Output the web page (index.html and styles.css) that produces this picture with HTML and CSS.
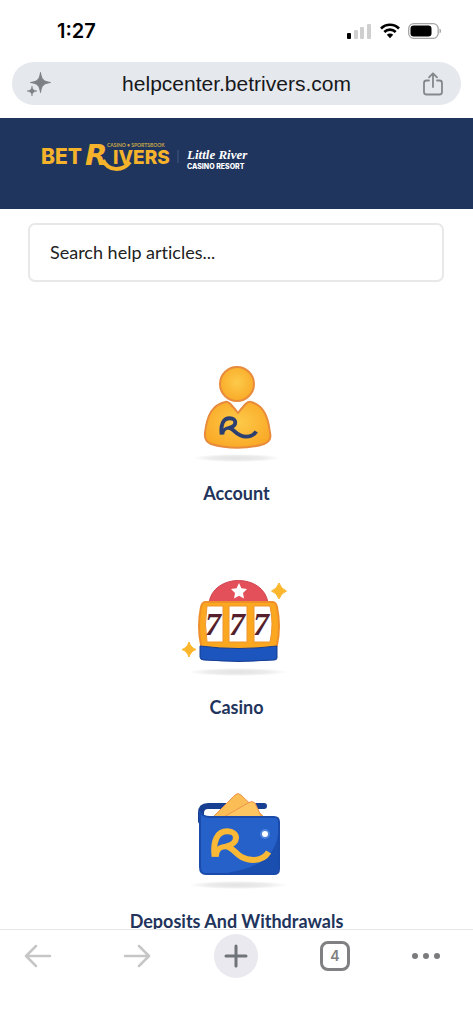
FILE: index.html
```html
<!DOCTYPE html>
<html lang="en">
<head>
  <meta charset="UTF-8">
  <meta name="viewport" content="width=device-width, initial-scale=1.0">
  <title>BetRivers Help Center</title>
  <link rel="stylesheet" href="styles.css">
</head>
<body>

  <!-- shared shapes -->
  <svg class="defs" aria-hidden="true">
    <defs>
      <radialGradient id="gold" cx="50%" cy="45%" r="60%">
        <stop offset="0" stop-color="#fdca4a"/>
        <stop offset="1" stop-color="#f9a825"/>
      </radialGradient>
      <radialGradient id="shadow">
        <stop offset="0" stop-color="#e2e2e2"/>
        <stop offset="0.6" stop-color="#ececec"/>
        <stop offset="1" stop-color="#fff"/>
      </radialGradient>
      <symbol id="mark" viewBox="0 0 210 150">
        <path d="M26 110 C20 62 34 34 64 34 C98 34 100 70 62 79 C88 84 92 119 142 120 C162 120 178 112 188 96" fill="none" stroke="currentColor" stroke-width="18" stroke-linejoin="round"/>
        <path d="M30 110 C32 88 40 79 66 79" fill="none" stroke="currentColor" stroke-width="16"/>
      </symbol>
    </defs>
  </svg>

  <div class="status-bar">
    <span class="time">1:27</span>
    <div class="status-icons">
      <svg width="25" height="16" viewBox="0 0 25 16" aria-hidden="true">
        <rect x="0" y="10" width="4" height="6" rx="1" fill="#000"/>
        <rect x="7" y="7" width="4" height="9" rx="1" fill="#cfcfcf"/>
        <rect x="13" y="4" width="4" height="12" rx="1" fill="#cfcfcf"/>
        <rect x="20" y="1" width="4" height="15" rx="1" fill="#cfcfcf"/>
      </svg>
      <svg width="20" height="16" viewBox="0 0 20 16" aria-hidden="true">
        <path d="M1 5.5 C6 0.4 14 0.4 19 5.5 M4.3 9 C7.5 5.8 12.5 5.8 15.7 9" fill="none" stroke="#000" stroke-width="2.6"/>
        <path d="M6.8 11.8 C8.6 10 11.4 10 13.2 11.8 L10 15.2 Z" fill="#000"/>
      </svg>
      <svg width="34" height="16" viewBox="0 0 34 16" aria-hidden="true">
        <rect x="0.7" y="0.7" width="29.5" height="14.6" rx="5" fill="#fff" stroke="#a5a5a5" stroke-width="1.3"/>
        <rect x="2.5" y="2.5" width="21" height="11" rx="3.2" fill="#000"/>
        <path d="M31.5 5.5 C33.6 6.3 33.6 9.7 31.5 10.5 Z" fill="#a5a5a5"/>
      </svg>
    </div>
  </div>

  <div class="address-bar">
    <button class="icon-btn" aria-label="Assistant">
      <svg width="24" height="24" viewBox="0 0 24 24" fill="#7d8184">
        <path d="M12.5 0.5 C13.5 7.5 15.5 9.5 22.5 10.5 C15.5 11.5 13.5 13.5 12.5 20.5 C11.5 13.5 9.5 11.5 2.5 10.5 C9.5 9.5 11.5 7.5 12.5 0.5Z" stroke="#7d8184"/>
        <path d="M4 14 C4.5 17.5 5.5 18.5 9 19 C5.5 19.5 4.5 20.5 4 24 C3.5 20.5 2.5 19.5 -1 19 C2.5 18.5 3.5 17.5 4 14Z" stroke="#7d8184" stroke-width="0.5"/>
      </svg>
    </button>
    <span class="url">helpcenter.betrivers.com</span>
    <button class="icon-btn" aria-label="Share">
      <svg width="24" height="24" viewBox="0 0 24 24" fill="none" stroke="#85888b" stroke-width="1.8" stroke-linecap="round" stroke-linejoin="round">
        <path d="M8 8.5 H5.5 Q3 8.5 3 11 V20 Q3 22.5 5.5 22.5 H18.5 Q21 22.5 21 20 V11 Q21 8.5 18.5 8.5 H16"/>
        <path d="M12 15 V1.5 M8 5.3 L12 1.3 L16 5.3"/>
      </svg>
    </button>
  </div>

  <header class="site-header">
    <a href="#" class="logo" aria-label="BetRivers Little River Casino Resort">
      <svg width="210" height="40" viewBox="0 0 210 40">
        <g class="brand">
          <text x="-1" y="29" class="brand-bet">BET</text>
          <text x="43" y="30" class="brand-r">R</text>
          <text x="71" y="29">IVERS</text>
          <path d="M61 25 C66 36 80 37 88 27" fill="none" stroke="#f5b32c" stroke-width="4"/>
          <text x="65" y="12" class="tagline">CASINO • SPORTSBOOK</text>
        </g>
        <path d="M136 15 V28" stroke="#46587d"/>
        <g class="resort">
          <text x="145" y="24" class="script">Little River</text>
          <text x="145" y="34" class="resort-sub">CASINO RESORT</text>
        </g>
      </svg>
    </a>
  </header>

  <main>
    <form class="search">
      <input type="text" placeholder="Search help articles..." aria-label="Search help articles">
    </form>

    <div class="categories">
      <a href="#" class="category">
        <svg width="110" height="110" viewBox="0 0 110 110" aria-hidden="true">
          <ellipse cx="55" cy="103" rx="44" ry="4" fill="url(#shadow)"/>
          <circle cx="55" cy="29" r="17" fill="url(#gold)" stroke="#e88b3c" stroke-width="2"/>
          <path d="M43 47 C46 46 48 48 56 58 C64 48 66 46 69 47 C80 50 86 59 88 78 Q90 86 82 89 C66 94 45 94 29 89 Q22 86 23 78 C25 59 31 50 43 47Z" fill="url(#gold)" stroke="#e88b3c" stroke-width="2"/>
          <use href="#mark" x="34" y="56" width="45" height="32" class="mark-navy"/>
        </svg>
        <span>Account</span>
      </a>

      <a href="#" class="category">
        <svg width="110" height="110" viewBox="0 0 110 110" aria-hidden="true">
          <ellipse cx="56" cy="103" rx="50" ry="4" fill="url(#shadow)"/>
          <path d="M27 34 C31 4 82 4 86 34Z" fill="#e4505a" stroke="#cf4450" stroke-width="1"/>
          <path d="M57 14 L59.4 19.2 L65 20 L61 24 L62 29.5 L57 26.8 L52 29.5 L53 24 L49 20 L54.6 19.2Z" fill="#fff"/>
          <path d="M24 33 H90 Q94 33 95 38 Q99 57 95 76 Q94 80 90 80 H24 Q20 80 19 76 Q15 57 19 38 Q20 33 24 33Z" fill="#fba71f" stroke="#ef8f2a" stroke-width="2"/>
          <path d="M25 37 H41 V73 H25 Q22 55 25 37Z M47 37 H65 V73 H47Z M72 37 H88 Q92 55 88 73 H72Z" fill="#fff" stroke="#ee9630" stroke-width="1"/>
          <g class="sevens">
            <text x="23" y="66">7</text>
            <text x="47" y="66">7</text>
            <text x="71" y="66">7</text>
          </g>
          <path d="M18 77 Q57 82 95 77 V89 Q95 91 92 91 Q57 94 22 91 Q18 91 18 88Z" fill="#1c55bd" stroke="#173f91" stroke-width="1"/>
          <path d="M97 14 Q99 20 104.5 22 Q99 24 97 30 Q95 24 89.5 22 Q95 20 97 14Z M7 73 Q9 79 14 80.5 Q9 82 7 88 Q5 82 0 80.5 Q5 79 7 73Z" fill="#fbb62c" stroke="#fbb62c" stroke-width="1" stroke-linejoin="round"/>
        </svg>
        <span>Casino</span>
      </a>

      <a href="#" class="category">
        <svg width="110" height="110" viewBox="0 0 110 110" aria-hidden="true">
          <ellipse cx="56" cy="102" rx="50" ry="4" fill="url(#shadow)"/>
          <path d="M82 23 H26 Q19 23 19 30 V38" fill="none" stroke="#173f91" stroke-width="6" stroke-linecap="round"/>
          <path d="M30 35 L53 12 Q56 9 59 12 L82 34Z" fill="#fbbd55" stroke="#ed944c" stroke-width="1"/>
          <path d="M40 35 L66 20 Q70 17 73 20 L80 35Z" fill="#fdc662" stroke="#ed944c" stroke-width="1"/>
          <path d="M18 28 Q20 34 28 34 H92 Q97 34 97 39 V86 Q97 91 92 91 H24 Q18 91 18 84Z" fill="#2661c9" stroke="#1a4baa" stroke-width="2"/>
          <path d="M96 52 C92 77 73 85 45 90 H92 Q96 90 96 86Z" fill="#1a4fb0"/>
          <circle cx="83" cy="51" r="5" fill="#70a6ef" opacity="0.5"/>
          <circle cx="83" cy="51" r="3" fill="#fff"/>
          <use href="#mark" x="24" y="37" width="70" height="50" class="mark-gold"/>
        </svg>
        <span>Deposits And Withdrawals</span>
      </a>
    </div>
  </main>

  <nav class="toolbar">
    <button aria-label="Back">
      <svg width="28" height="24" viewBox="0 0 28 24" class="arrow"><path d="M26 12 H2 M12 2 L2 12 L12 22"/></svg>
    </button>
    <button aria-label="Forward">
      <svg width="28" height="24" viewBox="0 0 28 24" class="arrow"><path d="M2 12 H26 M16 2 L26 12 L16 22"/></svg>
    </button>
    <button class="new-tab" aria-label="New tab">
      <svg width="24" height="24" viewBox="0 0 24 24"><path d="M12 2 V22 M2 12 H22" stroke="#707379" stroke-width="3" stroke-linecap="round"/></svg>
    </button>
    <button aria-label="Open tabs"><span class="tab-count">4</span></button>
    <button class="more" aria-label="More">
      <svg width="28" height="8" viewBox="0 0 28 8" fill="#7b7b7d"><circle cx="3" cy="4" r="3"/><circle cx="14" cy="4" r="3"/><circle cx="25" cy="4" r="3"/></svg>
    </button>
  </nav>

</body>
</html>
```

FILE: styles.css
```css
* {
  margin: 0;
  padding: 0;
  box-sizing: border-box;
}
body {
  height: 100vh;
  display: flex;
  flex-direction: column;
  background: #fff;
  font-family: Lato, sans-serif;
}
button {
  border: none;
  background: none;
  cursor: pointer;
}
svg {
  display: block;
  flex: none;
  overflow: visible;
}
.defs {
  position: absolute;
  width: 0;
  height: 0;
}

/* phone status bar */
.status-bar {
  height: 62px;
  flex: none;
  display: flex;
  justify-content: space-between;
  align-items: center;
  padding: 0 31px 0 57px;
}
.time {
  font: 600 20px Inter, sans-serif;
}
.status-icons {
  display: flex;
  gap: 8px;
}

/* browser address bar */
.address-bar {
  height: 43px;
  flex: none;
  display: flex;
  justify-content: space-between;
  align-items: center;
  margin: 0 12px 13px;
  padding: 0 16px;
  border-radius: 22px;
  background: #e5e8ec;
}
.icon-btn {
  width: 24px;
  height: 24px;
}
.url {
  font: 21px "Liberation Sans", sans-serif;
  color: #16181b;
}

.site-header {
  height: 91px;
  flex: none;
  padding: 17px 42px;
  background: #1f355e;
}
.logo {
  display: inline-block;
}
.brand {
  fill: #f5b32c;
  font: 800 19px Inter, sans-serif;
}
.brand-bet {
  font-size: 21px;
}
.brand-r {
  font: italic 700 29px "DejaVu Sans", sans-serif;
}
.tagline {
  font: 700 5px Lato, sans-serif;
  fill: #c9a646;
}
.resort {
  fill: #fff;
}
.script {
  font: italic 700 13px "Liberation Serif", serif;
}
.resort-sub {
  font: 800 7px Inter, sans-serif;
}

main {
  flex: 1;
  min-height: 0;
  overflow: hidden;
}
.search {
  padding: 14px 29px 0 28px;
}
.search input {
  width: 100%;
  height: 59px;
  padding: 0 20px 2px;
  border: 2px solid #e8e8e8;
  border-radius: 7px;
  font: 18px Lato, sans-serif;
  font-variant-ligatures: none;
  color: #222;
}
.search input::placeholder {
  color: #222;
}

.categories {
  display: flex;
  flex-direction: column;
  align-items: center;
  gap: 64px;
  padding-top: 73px;
}
.category {
  display: flex;
  flex-direction: column;
  align-items: center;
  gap: 16px;
  color: #22345c;
  font-size: 18px;
  font-weight: 700;
  line-height: 24px;
  text-decoration: none;
}
.mark-navy {
  color: #2b3f70;
}
.mark-gold {
  color: #f9b936;
}
.sevens {
  font: italic 700 32px "Liberation Serif", serif;
  fill: #551f2b;
}

/* browser bottom toolbar */
.toolbar {
  height: 95px;
  flex: none;
  display: flex;
  justify-content: space-between;
  align-items: flex-start;
  padding: 4px 33px 0 16px;
  border-top: 1px solid #e3e6e9;
  background: #fff;
}
.toolbar button {
  width: 44px;
  height: 44px;
  display: flex;
  justify-content: center;
  align-items: center;
}
.toolbar .more {
  width: 28px;
}
.toolbar .new-tab {
  border-radius: 50%;
  background: #e9e9ef;
}
.arrow {
  fill: none;
  stroke: #c6c6c6;
  stroke-width: 2.5;
  stroke-linecap: round;
  stroke-linejoin: round;
}
.tab-count {
  width: 30px;
  height: 30px;
  border: 3px solid #808082;
  border-radius: 8px;
  color: #808082;
  font: 600 14px/24px Inter, sans-serif;
}
```
